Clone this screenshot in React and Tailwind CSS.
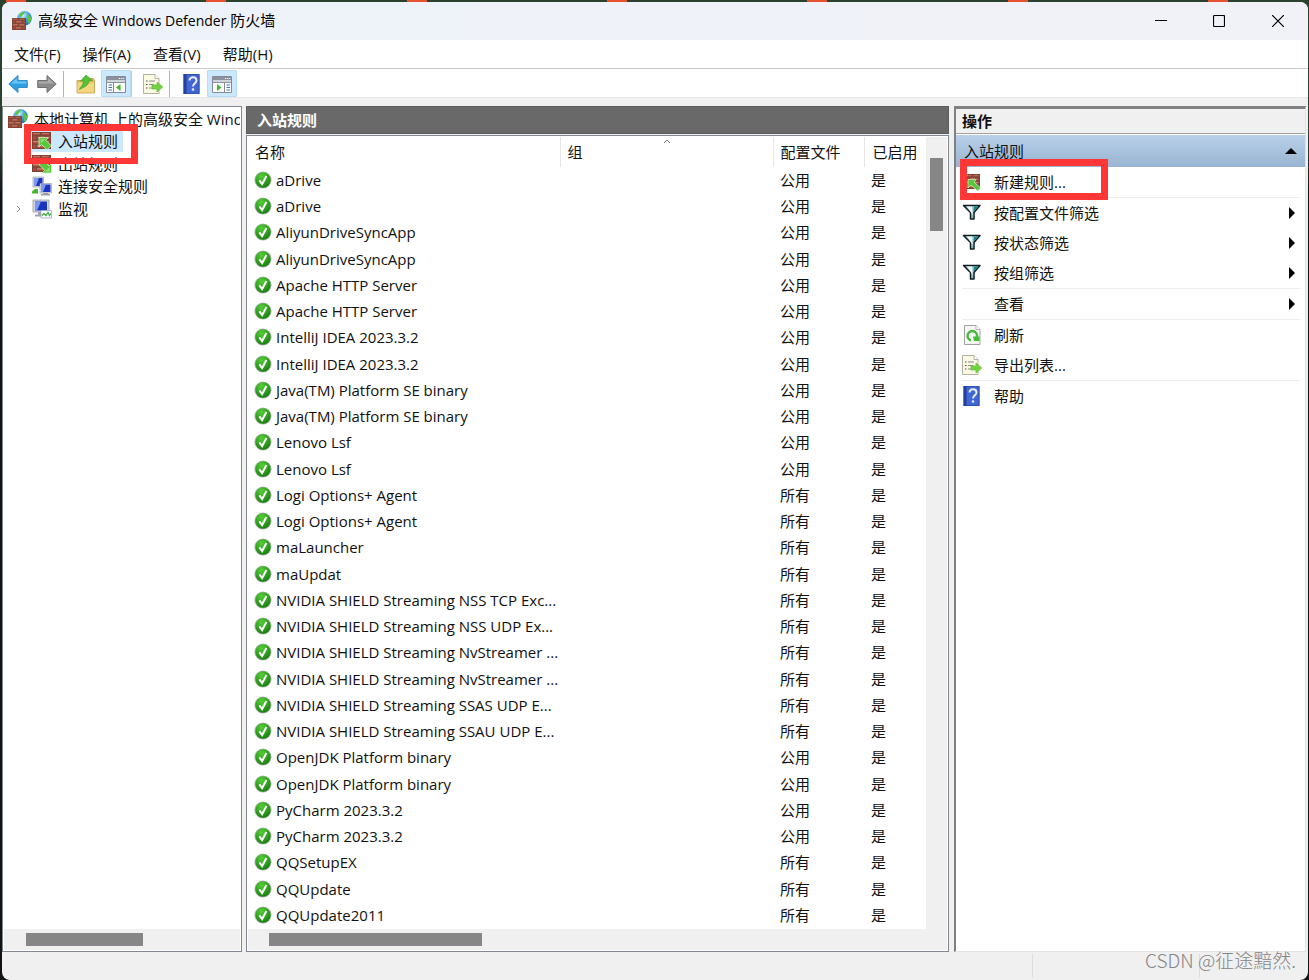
import React from "react";

const rules = [
  ["aDrive", "公用"],
  ["aDrive", "公用"],
  ["AliyunDriveSyncApp", "公用"],
  ["AliyunDriveSyncApp", "公用"],
  ["Apache HTTP Server", "公用"],
  ["Apache HTTP Server", "公用"],
  ["IntelliJ IDEA 2023.3.2", "公用"],
  ["IntelliJ IDEA 2023.3.2", "公用"],
  ["Java(TM) Platform SE binary", "公用"],
  ["Java(TM) Platform SE binary", "公用"],
  ["Lenovo Lsf", "公用"],
  ["Lenovo Lsf", "公用"],
  ["Logi Options+ Agent", "所有"],
  ["Logi Options+ Agent", "所有"],
  ["maLauncher", "所有"],
  ["maUpdat", "所有"],
  ["NVIDIA SHIELD Streaming NSS TCP Exc...", "所有"],
  ["NVIDIA SHIELD Streaming NSS UDP Ex...", "所有"],
  ["NVIDIA SHIELD Streaming NvStreamer ...", "所有"],
  ["NVIDIA SHIELD Streaming NvStreamer ...", "所有"],
  ["NVIDIA SHIELD Streaming SSAS UDP E...", "所有"],
  ["NVIDIA SHIELD Streaming SSAU UDP E...", "所有"],
  ["OpenJDK Platform binary", "公用"],
  ["OpenJDK Platform binary", "公用"],
  ["PyCharm 2023.3.2", "公用"],
  ["PyCharm 2023.3.2", "公用"],
  ["QQSetupEX", "所有"],
  ["QQUpdate", "所有"],
  ["QQUpdate2011", "所有"],
];

const Svg = ({ children, className = "w-5 h-5" }) => (
  <svg viewBox="0 0 20 20" className={`${className} shrink-0`} aria-hidden="true">
    {children}
  </svg>
);

const Bricks = ({ x = 0, y = 0, w = 19, h = 16 }) => (
  <svg x={x} y={y} width={w} height={h} viewBox="0 0 19 16" preserveAspectRatio="none">
    <rect width="19" height="16" fill="#a94a36" />
    <path d="M0 1h8M10 1h8M6 5h7M0 9h8M10 9h8M5 13h8" stroke="#cf8670" strokeWidth="1.200" />
    <path
      d="M0 3.5h19M0 7.5h19M0 11.5h19M8.5 0v3.5M17.5 0v3.5M4.5 3.5v4M13.5 3.5v4M8.5 7.5v4M17.5 7.5v4M4.5 11.5v4.500M13.5 11.5v4.500"
      stroke="#6d4a42"
      strokeWidth="1"
      fill="none"
    />
    <rect x=".5" y=".5" width="18" height="15" fill="none" stroke="#7d4235" strokeWidth="1" />
  </svg>
);

const FirewallIcon = () => (
  <Svg>
    <defs>
      <radialGradient id="globe" cx=".4" cy=".3" r=".8">
        <stop offset="0" stopColor="#d3f4ff" />
        <stop offset=".5" stopColor="#3b9fe6" />
        <stop offset="1" stopColor="#1a4fa8" />
      </radialGradient>
    </defs>
    <circle cx="12.500" cy="7.300" r="7.200" fill="url(#globe)" />
    <path d="M7.500 3.500c1.500-2 4-3 5-2.500S11 4 10 5 8.500 6 7.500 6ZM16 3.500c2 1 3.500 3 3 5.500-.7 2.500-2 4-3 3.500s.5-3-.7-4.500-.3-3.500.7-4.500Z" fill="#5ac443" />
    <Bricks x={0} y={7} w={14} h={12} />
  </Svg>
);

const InboundIcon = () => (
  <Svg>
    <Bricks x={0} y={1} h={17} />
    <path d="M7 6.500h9.500l-2.700 2.700 5.400 5.400-4.400 4.400-5.300-5.500L7 16Z" fill="#56c83a" stroke="#d9f3d0" strokeWidth=".8" />
    <path d="M8.500 8h5L9 12.500Z" fill="#8fe070" />
  </Svg>
);

const OutboundIcon = () => (
  <Svg>
    <Bricks x={0} y={1} h={17} />
    <path d="M19.500 19H10l2.700-2.700-5.400-5.400 4.400-4.400 5.300 5.500 2.500-2.500Z" fill="#56c83a" stroke="#d9f3d0" strokeWidth=".8" />
    <path d="M18 17.500h-5l4.500-4.500Z" fill="#8fe070" />
  </Svg>
);

const NewRuleIcon = () => (
  <Svg>
    <Bricks x={4} y={2} w={14} h={15} />
    <path d="M6 7.500h8.500L12 10l6.500 6-3 3-6.500-6-3 3Z" fill="#56c83a" stroke="#d9f5cd" strokeWidth=".7" />
    <path d="m3.500 0 .8 2.200 2.200.8-2.200.8L3.500 6l-.8-2.200L.5 3l2.200-.8Z" fill="#f6b73c" />
  </Svg>
);

const ConnectionIcon = () => (
  <Svg>
    <path d="M1 1h10.500v10H1Z" fill="#dcdfe6" stroke="#8d929e" strokeWidth=".6" />
    <path d="M2 2h8.500v8H2Z" fill="#1a34c0" />
    <path d="M2 2h5l-3 8H2Z" fill="#7d98f0" />
    <path d="M0 15.500 3 13h3v4.500H0Z" fill="#46b52e" />
    <path d="M8 7.500h11.500V17H8Z" fill="#e4e6eb" stroke="#8d929e" strokeWidth=".6" />
    <path d="M9 8.500h9.500V16H9Z" fill="#1a34c0" />
    <path d="M9 8.500h5L11 16H9Z" fill="#7d98f0" />
    <path d="M11 17h5v1h2v1.500H9V18h2Z" fill="#9a9da5" />
  </Svg>
);

const MonitorIcon = () => (
  <Svg>
    <path d="M1 1h16v12H1Z" fill="#d4d7df" stroke="#888d98" strokeWidth=".7" />
    <path d="M3 2.500h12v9H3Z" fill="#1a34c0" />
    <path d="M3 2.500h6l-4 9H3Z" fill="#7d98f0" />
    <path d="M6 13h5v2h2v2.500H3v-2h3Z" fill="#9fa3ad" />
    <path d="M9 11.500h10.500V19H9Z" fill="#f8fbff" stroke="#8aa0be" strokeWidth=".7" />
    <path d="m10 16.500 2-2 2 2 2-3 1.500 3 1.500-2" fill="none" stroke="#39a836" strokeWidth="1.200" />
  </Svg>
);

const ArrowIcon = ({ forward }) => (
  <Svg className={forward ? "w-5 h-5 -scale-x-100" : "w-5 h-5"}>
    <path
      d="M.8 10 10 1.500v5h9.300v7H10v5Z"
      fill={forward ? "#8b8b8b" : "#2f9fe2"}
      stroke={forward ? "#707070" : "#3a8cc2"}
      strokeWidth="1"
      strokeLinejoin="round"
    />
    <path d="M3 9.500 9 4v3.500h9.300v2Z" fill={forward ? "#ababab" : "#6cc6f3"} />
  </Svg>
);

const FolderUpIcon = () => (
  <Svg>
    <path d="M1 6.500h6l1-2h9.500l1 2V19H1Z" fill="#e2b755" stroke="#c09a45" strokeWidth=".8" />
    <path d="M1.500 8.500h16.500v10H1.500Z" fill="#f3d681" />
    <path d="M3.500 15.500c.5-3 3.500-3 4-8.500H4.500L10 1l6.500 5.500H13c0 5-4 6-9.500 9Z" fill="#55c235" stroke="#3b9a26" strokeWidth=".6" />
  </Svg>
);

const PaneIcon = ({ right }) => (
  <Svg>
    <path d="M.5 2.500h19v16H.5Z" fill="#fdfdfd" stroke="#858b94" />
    <path d="M1 3h18v3H1Z" fill="#8b929d" />
    <path d="M13 4.500h1.200M15.200 4.500h1.200M17.300 4.500h1" stroke="#fff" />
    <path d="M1 6h18v2.500H1Z" fill="#d2d5da" />
    <path d="M1 8.500h18" stroke="#8b929d" />
    {right ? (
      <>
        <path d="M12.500 8.500v10" stroke="#858b94" />
        <path d="M14.500 11h3.500M14.500 13.500h3.500M14.500 16h3.500" stroke="#3e76bd" />
        <path d="M5 10v7l4.500-3.500Z" fill="#44b52c" />
      </>
    ) : (
      <>
        <path d="M7.500 8.500v10" stroke="#858b94" />
        <path d="M2.500 11H6M2.500 13.500H6M2.500 16H6" stroke="#3e76bd" />
        <path d="M14.500 10v7L10 13.500Z" fill="#44b52c" />
      </>
    )}
  </Svg>
);

const ExportIcon = () => (
  <Svg>
    <path d="M.5.5h11.500l4 4v15H.5Z" fill="#fbf9e4" stroke="#b3b1a0" />
    <path d="M12 .5v4h4" fill="#fff" stroke="#a3a18f" strokeWidth=".8" />
    <path d="M3 7h1.500M3 10.500h1.500M3 14h1.500" stroke="#555" strokeWidth="1.200" />
    <path d="M6 7h6M6 10.500h5M6 14h5" stroke="#8c8c8c" strokeWidth="1.200" />
    <path d="M9 11h5V8l5.800 5-5.800 5v-3H9Z" fill="#73d33f" stroke="#62bb3d" strokeWidth=".7" />
  </Svg>
);

const HelpIcon = () => (
  <Svg>
    <path d="M1.500 0H17.500v20H1.500Z" fill="#4166d3" />
    <path d="M1.500 0H4.500v20H1.500Z" fill="#22409f" />
    <path d="M4.500 .5h12.500v19H4.500" fill="none" stroke="#2f50b4" />
    <path d="M7.500 6.500c0-4.300 7-4.300 7 0 0 2.700-3.500 2.800-3.500 6" fill="none" stroke="#e8eefc" strokeWidth="2" />
    <circle cx="11" cy="15.500" r="1.300" fill="#e8eefc" />
  </Svg>
);

const FilterIcon = () => (
  <Svg>
    <path d="M1.500 2.500h16.500L12 9.500V16H8.500V9.500Z" fill="#a9d0d3" stroke="#101c1f" strokeWidth="1.500" strokeLinejoin="round" />
    <path d="M12 3.500h4.500L11.300 9v6.500H10.500Z" fill="#168087" />
    <path d="M5 3.500h5l.3 5v3Z" fill="#eef6f6" />
  </Svg>
);

const RefreshIcon = () => (
  <Svg>
    <path d="M2.500.5H14l4 4v15H2.500Z" fill="#f7f7f7" stroke="#a0a0a0" />
    <path d="M14 .5v4h4" fill="#fff" stroke="#a0a0a0" strokeWidth=".8" />
    <path d="M9 15.300A4.700 4.700 0 1 1 14.800 12" fill="none" stroke="#45bb38" strokeWidth="2.400" />
    <path d="M11 11.500h6.500v4.500H12Z" fill="#45bb38" />
  </Svg>
);

const CheckIcon = () => (
  <Svg className="w-[18px] h-[18px]">
    <defs>
      <radialGradient id="ok" cx=".4" cy=".25" r=".8">
        <stop offset="0" stopColor="#55cf38" />
        <stop offset="1" stopColor="#167b0e" />
      </radialGradient>
    </defs>
    <circle cx="10" cy="10" r="9.500" fill="#a9b5a6" />
    <circle cx="10" cy="10" r="8.500" fill="url(#ok)" />
    <path d="m6 10.500 3 4L13.800 5.500" fill="none" stroke="#fff" strokeWidth="2.200" />
  </Svg>
);

const treeItems = [
  { label: "入站规则", Icon: InboundIcon, selected: true },
  { label: "出站规则", Icon: OutboundIcon },
  { label: "连接安全规则", Icon: ConnectionIcon },
  { label: "监视", Icon: MonitorIcon, expandable: true },
];

const actionGroups = [
  [{ label: "新建规则...", Icon: NewRuleIcon, marked: true }],
  [
    { label: "按配置文件筛选", Icon: FilterIcon, submenu: true },
    { label: "按状态筛选", Icon: FilterIcon, submenu: true },
    { label: "按组筛选", Icon: FilterIcon, submenu: true },
  ],
  [{ label: "查看", submenu: true }],
  [
    { label: "刷新", Icon: RefreshIcon },
    { label: "导出列表...", Icon: ExportIcon },
  ],
  [{ label: "帮助", Icon: HelpIcon }],
];

function TitleBar() {
  return (
    <header className="flex h-[38px] items-center bg-gradient-to-r from-[#edf2fa] to-[#f1f2f7] pl-[10px] text-black">
      <FirewallIcon />
      <h1 className="ml-[6px] flex-1 pb-[2px]">
        高级安全 <span className="text-sm">Windows Defender</span> 防火墙
      </h1>
      <button aria-label="最小化" className="flex h-full w-[58px] items-center justify-center">
        <svg viewBox="0 0 12 12" className="h-3 w-3"><path d="M0 5.500h12" stroke="#000" /></svg>
      </button>
      <button aria-label="最大化" className="flex h-full w-[58px] items-center justify-center">
        <svg viewBox="0 0 12 12" className="h-3 w-3">
          <rect x=".5" y=".5" width="11" height="11" rx="1" fill="none" stroke="#000" strokeWidth="1.200" />
        </svg>
      </button>
      <button aria-label="关闭" className="flex h-full w-[60px] items-center justify-center">
        <svg viewBox="0 0 12 12" className="h-3 w-3">
          <path d="m0 0 12 12M12 0 0 12" stroke="#000" strokeWidth="1.200" />
        </svg>
      </button>
    </header>
  );
}

function MenuBar() {
  return (
    <nav className="flex h-[29px] items-center gap-[22px] border-b border-[#c8c8c8] bg-white pb-px pl-3">
      {["文件(F)", "操作(A)", "查看(V)", "帮助(H)"].map((item) => (
        <button key={item}>{item}</button>
      ))}
    </nav>
  );
}

function Toolbar() {
  return (
    <div className="flex h-[29px] items-center border-b border-[#e6e6e6] bg-white pl-[6px] pt-px">
      <button aria-label="后退"><ArrowIcon /></button>
      <button aria-label="前进" className="ml-[9px]"><ArrowIcon forward /></button>
      <span className="ml-[6px] h-[26px] w-px bg-[#b4b4b4]" />
      <button aria-label="上移" className="ml-3"><FolderUpIcon /></button>
      <button aria-label="显示控制台树" className="ml-[5px] flex h-[27px] w-[30px] items-center justify-center rounded-[1px] border border-[#b5dbf7] bg-[#cce8ff]">
        <PaneIcon />
      </button>
      <span className="h-[26px] w-px bg-[#c9c9c9]" />
      <button aria-label="导出列表" className="ml-[11px]"><ExportIcon /></button>
      <span className="ml-[6px] h-[26px] w-px bg-[#b4b4b4]" />
      <button aria-label="帮助" className="ml-3"><HelpIcon /></button>
      <button aria-label="显示操作窗格" className="ml-[5px] flex h-[27px] w-[30px] items-center justify-center rounded-[1px] border border-[#b5dbf7] bg-[#cce8ff]">
        <PaneIcon right />
      </button>
    </div>
  );
}

function TreePane() {
  return (
    <aside className="flex w-[240px] shrink-0 flex-col border border-[#828790] bg-white p-px">
      <ul className="flex-1 whitespace-nowrap">
        <li className="flex h-[22px] items-center overflow-hidden pl-1">
          <FirewallIcon />
          <span className="ml-[6px] min-w-0 flex-1 overflow-hidden pb-px">本地计算机 上的高级安全 Wind</span>
        </li>
        {treeItems.map(({ label, Icon, selected, expandable }) => (
          <li key={label} className="relative flex h-[22px] items-center pl-[11px] odd:h-[23px]">
            <span className="w-[17px]">
              {expandable && (
                <svg viewBox="0 0 8 8" className="h-2 w-2"><path d="m2 1 3 3-3 3" fill="none" stroke="#8a8a8a" /></svg>
              )}
            </span>
            <button className={selected ? "flex h-[22px] items-center bg-[#cce8ff] pr-[5px]" : "flex h-[22px] items-center pr-[5px]"}>
              <Icon />
              <span className="ml-[6px]">{label}</span>
            </button>
            {selected && (
              <span className="absolute -top-[6px] left-[20px] z-10 h-[40px] w-[114px] border-[7px] border-b-[6px] border-[#fd3636]" />
            )}
          </li>
        ))}
      </ul>
      <div className="h-[21px] bg-[#f0f0f0] py-1 pl-[22px]">
        <div className="h-[13px] w-[117px] bg-[#868686]" />
      </div>
    </aside>
  );
}

function RuleList() {
  return (
    <main className="flex min-w-0 flex-1 flex-col">
      <h2 className="flex h-[28px] items-center border border-[#5c5c5c] bg-[#696969] pl-[10px] font-bold text-white">入站规则</h2>
      <div className="mt-px flex flex-1 flex-col border border-[#828790] bg-white p-px">
        <div className="flex flex-1">
          <table className="min-w-0 flex-1 table-fixed border-collapse self-start text-left">
            <colgroup>
              <col className="w-[312px]" />
              <col />
              <col className="w-[91px]" />
              <col className="w-[62px]" />
            </colgroup>
            <thead>
              <tr className="h-[30px]">
                <th className="border-r border-[#e5e5e5] pl-[7px] font-normal">名称</th>
                <th className="relative border-r border-[#e5e5e5] pl-[7px] font-normal">
                  组
                  <svg viewBox="0 0 8 5" className="absolute left-1/2 top-[2px] h-[5px] w-2 -translate-x-1/2">
                    <path d="m1 4 3-3 3 3" fill="none" stroke="#777" />
                  </svg>
                </th>
                <th className="border-r border-[#e5e5e5] pl-[7px] font-normal">配置文件</th>
                <th className="pl-2 font-normal">已启用</th>
              </tr>
            </thead>
            <tbody>
              {rules.map(([name, profile], i) => (
                <tr key={i} className="h-[26px] nth-[4n]:h-[27px]">
                  <td className="p-0 pl-[6px]">
                    <div className="flex items-center gap-1 whitespace-nowrap">
                      <CheckIcon />
                      <span>{name}</span>
                    </div>
                  </td>
                  <td />
                  <td className="p-0 pl-[7px]">{profile}</td>
                  <td className="p-0 pl-[7px]">是</td>
                </tr>
              ))}
            </tbody>
          </table>
          <div className="w-[21px] shrink-0 bg-[#f0f0f0] pl-1 pt-[21px]">
            <div className="h-[73px] w-[13px] bg-[#868686]" />
          </div>
        </div>
        <div className="h-[21px] bg-[#f0f0f0] py-1 pl-[21px]">
          <div className="h-[13px] w-[213px] bg-[#868686]" />
        </div>
      </div>
    </main>
  );
}

function ActionsPane() {
  return (
    <aside className="ml-px w-[352px] shrink-0 border-l-2 border-t-[3px] border-r border-b border-[#808080] border-r-[#e3e3e3] border-b-[#e3e3e3] bg-white">
      <h2 className="flex h-[25px] items-center border-b border-[#a0a0a0] bg-[#f0f0f0] pl-[6px] font-bold">操作</h2>
      <button className="mt-px flex h-8 w-full items-center justify-between bg-gradient-to-b from-[#b9d1ea] to-[#99b4d1] pl-2 pr-2">
        <span>入站规则</span>
        <svg viewBox="0 0 12 6" className="h-[6px] w-3"><path d="M0 6 6 0l6 6Z" /></svg>
      </button>
      <div className="divide-y divide-[#ececec] pl-[6px] pr-[5px]">
        {actionGroups.map((group, i) => (
          <ul key={i}>
            {group.map(({ label, Icon, submenu, marked }) => (
              <li key={label} className="relative">
                <button className="flex h-[30px] w-full items-center pb-px text-left">
                  <span className="w-8">{Icon && <Icon />}</span>
                  <span className="flex-1">{label}</span>
                  {submenu && (
                    <svg viewBox="0 0 6 12" className="mr-[5px] h-3 w-[6px]"><path d="M0 0l6 6-6 6Z" /></svg>
                  )}
                </button>
                {marked && (
                  <span className="absolute -left-[2px] -top-[8px] h-[41px] w-[148px] border-[7px] border-[#fd3636]" />
                )}
              </li>
            ))}
          </ul>
        ))}
      </div>
    </aside>
  );
}

export default function App() {
  return (
    <div className="flex min-h-screen flex-col bg-gradient-to-b from-[#2c4230] from-15% to-[#101413] to-20% pl-[2px] pr-px font-['Open_Sans','Noto_Sans_CJK_SC',sans-serif] text-[15px] leading-5 text-[#111]">
      {/* Browser tabs peeking out behind the window */}
      <div className="flex h-[2px] justify-between pl-1 pr-20">
        {[0, 1, 2, 3, 4, 5, 6].map((n) => (
          <span key={n} className="h-full w-5 bg-[#e8502f]" />
        ))}
      </div>
      <div className="flex flex-1 flex-col overflow-hidden rounded-lg bg-[#f0f0f0]">
        <TitleBar />
        <MenuBar />
        <Toolbar />
        <div className="flex flex-1 gap-1 pr-[2px] pt-2">
          <TreePane />
          <RuleList />
          <ActionsPane />
        </div>
        <footer className="flex h-7 justify-end">
          <span className="my-[2px] w-[167px] border-l border-[#dedede]" />
          <span className="relative my-[2px] w-[109px] border-l border-[#dedede]">
            <span className="absolute -top-[6px] right-3 whitespace-nowrap font-['Noto_Sans_CJK_SC',sans-serif] text-[19px] font-light leading-6 text-[#858585]">
              CSDN @征途黯然.
            </span>
          </span>
        </footer>
      </div>
    </div>
  );
}
